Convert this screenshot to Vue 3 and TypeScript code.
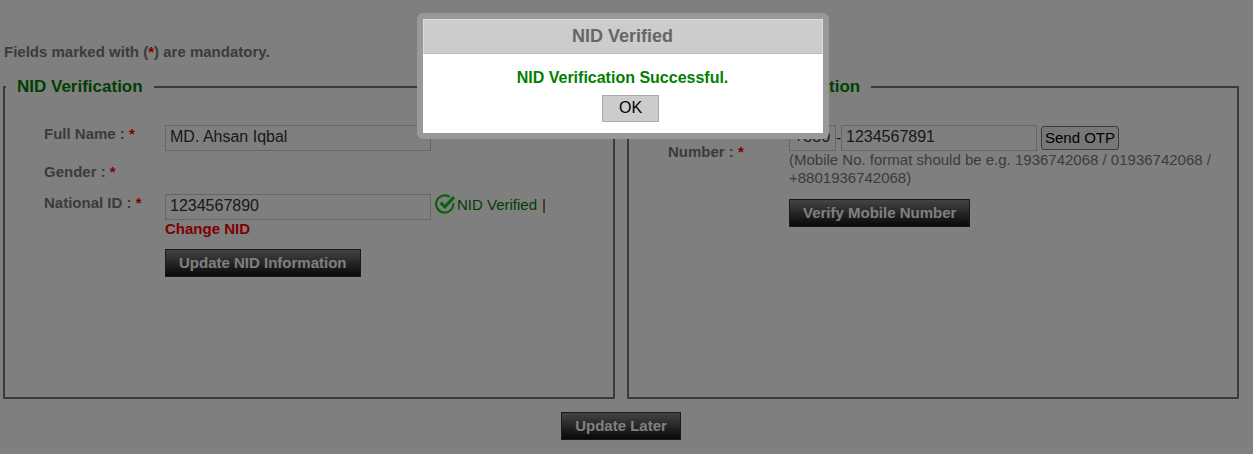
<script setup lang="ts">
import { ref } from 'vue'

const fullName = ref('MD. Ahsan Iqbal')
const nationalId = ref('1234567890')
const countryCode = ref('+880')
const mobile = ref('1234567891')
const dialogOpen = ref(true)
</script>

<template>
  <div class="page">
    <p class="note">Fields marked with (<span class="req">*</span>) are mandatory.</p>

    <div class="panels">
      <fieldset class="panel">
        <legend>NID Verification</legend>
        <div class="row name-row">
          <label for="full-name">Full Name : <span class="req">*</span></label>
          <div class="field"><input id="full-name" v-model="fullName" class="box wide" type="text" /></div>
        </div>
        <div class="row gender-row">
          <span class="label">Gender : <span class="req">*</span></span>
        </div>
        <div class="row">
          <label for="nid">National ID : <span class="req">*</span></label>
          <div class="field">
            <div class="line">
              <input id="nid" v-model="nationalId" class="box wide" type="text" />
              <span class="verified">
                <svg class="check" viewBox="0 0 21 21" aria-hidden="true">
                  <path d="M14.6 2.9A8.6 8.6 0 1 0 18.3 9.2" />
                  <path class="tick" d="M5.6 8.6L9.8 12.8L19 3.2" />
                </svg>
                <span>NID Verified</span>
                <span class="bar">|</span>
              </span>
            </div>
            <a class="change" href="#">Change NID</a>
            <button class="dark" type="button">Update NID Information</button>
          </div>
        </div>
      </fieldset>

      <fieldset class="panel">
        <legend>Mobile Number Verification</legend>
        <div class="row">
          <label for="mobile">Mobile<br />Number : <span class="req">*</span></label>
          <div class="field">
            <div class="line">
              <input v-model="countryCode" class="box code" type="text" aria-label="Country code" />
              <span class="dash">-</span>
              <input id="mobile" v-model="mobile" class="box number" type="text" />
              <button class="otp" type="button">Send OTP</button>
            </div>
            <p class="hint">(Mobile No. format should be e.g. 1936742068 / 01936742068 / +8801936742068)</p>
            <button class="dark" type="button">Verify Mobile Number</button>
          </div>
        </div>
      </fieldset>
    </div>

    <div class="footer"><button class="dark" type="button">Update Later</button></div>

    <div v-if="dialogOpen" class="overlay">
      <div class="dialog" role="dialog" aria-modal="true" aria-labelledby="dialog-title">
        <h2 id="dialog-title">NID Verified</h2>
        <div class="body">
          <p>NID Verification Successful.</p>
          <button class="ok" type="button" @click="dialogOpen = false">OK</button>
        </div>
      </div>
    </div>
  </div>
</template>

<style>
body {
  margin: 0;
  background: #fff;
}
</style>

<style scoped>
.page,
.page input,
.page button {
  font-family: "Liberation Sans", Arial, sans-serif;
  font-size: 15px;
  line-height: 18px;
}
.page {
  padding: 43px 14px 14px 3px;
  color: #777;
}
p {
  margin: 0;
}
.note {
  padding-left: 1px;
  font-weight: bold;
}
.req {
  color: #f00;
}
.panels {
  display: grid;
  grid-template-columns: 1fr 1fr;
  gap: 12px;
  margin-top: 17px;
}
.panel {
  box-sizing: border-box;
  min-width: 0;
  min-height: 321px;
  margin: 0;
  padding: 29px 11px 0 39px;
  border: 2px solid #777;
}
legend {
  margin-left: -38px;
  padding: 0 11px;
  color: #008000;
  font-size: 17px;
  font-weight: bold;
}
.row {
  display: grid;
  grid-template-columns: 121px 1fr;
}
.row label,
.label {
  font-weight: bold;
}
.name-row {
  min-height: 38px;
}
.gender-row {
  min-height: 31px;
}
.field {
  display: flex;
  flex-direction: column;
  align-items: flex-start;
}
.line {
  display: flex;
  align-items: center;
}
.page .box {
  box-sizing: border-box;
  height: 26px;
  padding: 1px 4px 3px;
  border: 1px solid #ccc;
  border-radius: 0;
  background: #fff;
  color: #333;
  font-size: 16px;
}
.wide {
  width: 266px;
}
.code {
  width: 47px;
}
.number {
  width: 196px;
}
.dash {
  width: 5px;
  color: #333;
}
.verified {
  display: flex;
  align-items: center;
  align-self: flex-start;
  margin-left: 4px;
  color: #008000;
}
.check {
  width: 21px;
  height: 21px;
  margin-right: 1px;
  fill: none;
  stroke: #1fc01f;
  stroke-width: 2.2;
}
.tick {
  stroke-width: 3.2;
}
.bar {
  margin-left: 5px;
  color: #333;
}
.change {
  color: #f00;
  font-weight: bold;
  text-decoration: none;
}
.hint {
  padding-bottom: 1px;
}
.dark {
  margin-top: 11px;
  padding: 4px 13px;
  border: 1px solid #333;
  border-radius: 0;
  background: linear-gradient(#888, #111);
  color: #fff;
  font-weight: bold;
}
.otp {
  margin-left: 4px;
  padding: 2px 3px;
  border: 1px solid #767676;
  border-radius: 3px;
  background: #efefef;
  color: #000;
}
.footer {
  padding-top: 2px;
  text-align: center;
}
.overlay {
  position: fixed;
  inset: 0;
  display: flex;
  justify-content: center;
  align-items: flex-start;
  padding: 13px 8px 0 0;
  background: rgba(0, 0, 0, 0.5);
}
.dialog {
  width: 400px;
  border: 6px solid #999;
  border-radius: 6px;
  background: #fff;
}
h2 {
  margin: 0;
  padding: 6px 0;
  border: 1px solid #ddd;
  border-bottom-color: #bbb;
  background: #ccc;
  color: #666;
  font-size: 18px;
  line-height: 21px;
  text-align: center;
}
.body {
  display: flex;
  flex-direction: column;
  align-items: center;
  padding: 15px 0 11px;
}
.body p {
  color: #008000;
  font-size: 16px;
  font-weight: bold;
}
.page .ok {
  margin: 8px 0 0 16px;
  padding: 3px 16px 4px;
  border: 1px solid #aaa;
  border-radius: 0;
  background: #ccc;
  color: #000;
  font-size: 16px;
}
</style>
